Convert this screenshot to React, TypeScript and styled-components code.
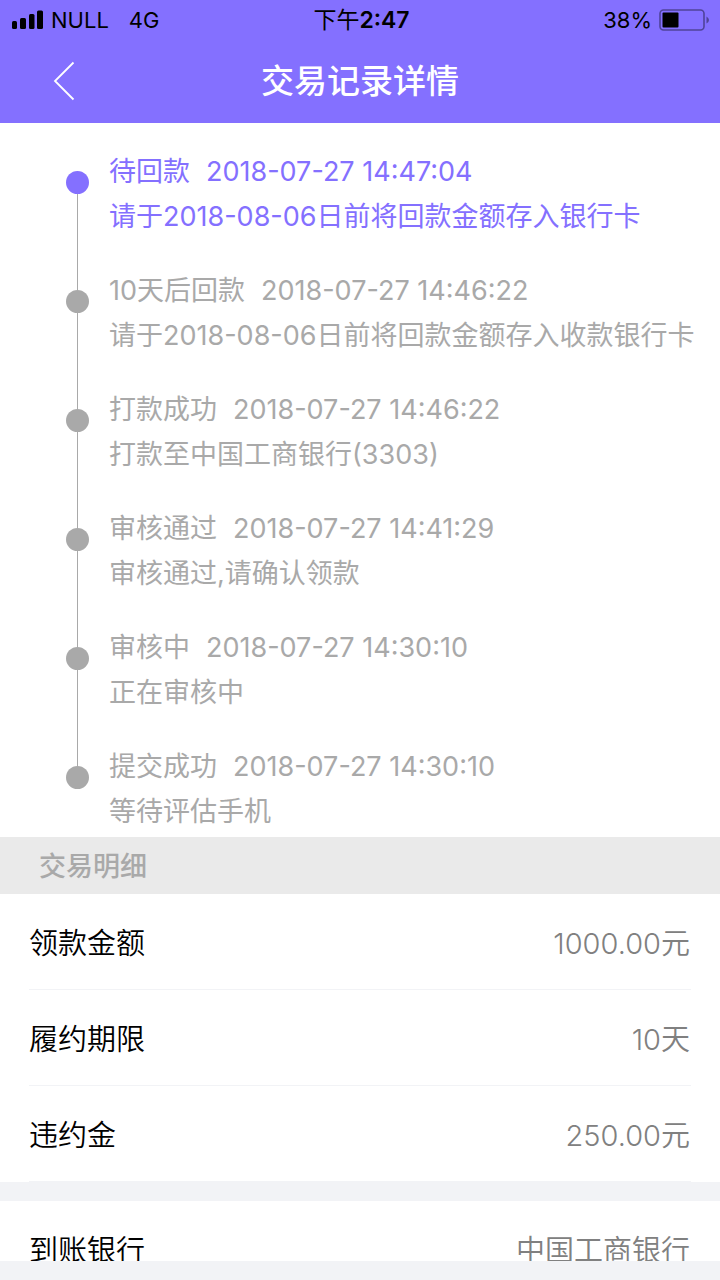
import React from "react";
import styled, { createGlobalStyle, css } from "styled-components";

const GlobalStyle = createGlobalStyle`
  *, *::before, *::after { box-sizing: border-box; }
  body {
    margin: 0;
    background: #f2f3f6;
    font-family: Inter, "Noto Sans CJK SC", sans-serif;
  }
`;

const accent = "#8470ff";
const muted = "#a9a9a9";

const Screen = styled.div`
  display: flex;
  flex-direction: column;
  height: 100vh;
`;

const Header = styled.header`
  flex: none;
  background: ${accent};
`;

const StatusBar = styled.div`
  display: grid;
  grid-template-columns: 1fr auto 1fr;
  align-items: center;
  height: 40px;
  padding: 0 11px;
  font-size: 22px;
  line-height: 40px;
  color: #000;
`;

const StatusGroup = styled.div<{ $end?: boolean }>`
  display: flex;
  align-items: center;
  gap: 7px;
  justify-content: ${(p) => (p.$end ? "flex-end" : "flex-start")};
  ${(p) => p.$end && css`margin-right: -1px;`}
`;

const Network = styled.span`
  margin-left: 13px;
`;

const Clock = styled.time`
  padding-left: 3px;
  font-size: 23px;
  font-weight: 600;
`;

const Period = styled.span`
  font-weight: 400;
`;

const NavBar = styled.div`
  display: grid;
  grid-template-columns: 80px 1fr 80px;
  align-items: center;
  height: 83px;
  padding-bottom: 2px;
`;

const BackButton = styled.button`
  display: flex;
  align-items: center;
  justify-content: flex-end;
  height: 100%;
  padding: 0 5px 0 0;
  border: 0;
  background: none;
  cursor: pointer;
`;

const Title = styled.h1`
  margin: 0;
  font-size: 33px;
  line-height: 48px;
  font-weight: 500;
  text-align: center;
  color: #fff;
`;

const Content = styled.main`
  flex: 1;
  min-height: 0;
  overflow-y: auto;
  scrollbar-width: none;
`;

const Timeline = styled.ol`
  margin: 0;
  padding: 26px 0 3px 66px;
  list-style: none;
  background: #fff;
`;

const Step = styled.li<{ $active?: boolean }>`
  display: flex;
  gap: 20px;
  color: ${(p) => (p.$active ? accent : muted)};
`;

const Rail = styled.div`
  display: flex;
  flex: none;
  flex-direction: column;
  align-items: center;
  width: 23px;
`;

const Lead = styled.span<{ $hidden: boolean }>`
  width: 1px;
  height: 22px;
  background: ${(p) => (p.$hidden ? "transparent" : muted)};
`;

const Trail = styled.span<{ $hidden: boolean }>`
  flex: 1;
  width: 1px;
  background: ${(p) => (p.$hidden ? "transparent" : muted)};
`;

const Dot = styled.span`
  width: 23px;
  height: 23px;
  border-radius: 50%;
  background: currentColor;
`;

const StepBody = styled.div<{ $last: boolean }>`
  padding-bottom: ${(p) => (p.$last ? 0 : 29)}px;
  font-size: 27px;
  line-height: 45px;
  font-weight: 380;
  white-space: nowrap;
`;

const StepLine = styled.p`
  display: flex;
  gap: 16px;
  margin: 0;
`;

const SectionTitle = styled.h2`
  margin: 0;
  padding: 2px 39px 0;
  font-size: 27px;
  line-height: 55px;
  font-weight: 500;
  color: ${muted};
  background: #eaeaea;
`;

const Details = styled.dl`
  margin: 0 0 19px;
  padding: 0 29px;
  background: #fff;
`;

const Row = styled.div`
  display: flex;
  align-items: center;
  justify-content: space-between;
  height: 96px;
  padding-top: 5px;
  border-bottom: 1px solid #f2f3f6;
  font-size: 29px;
  line-height: 44px;
  font-weight: 350;
`;

const Label = styled.dt`
  color: #000;
`;

const Value = styled.dd`
  margin: 0;
  padding-right: 1px;
  color: #808080;
`;

const BottomBar = styled.footer`
  flex: none;
  height: 19px;
  background: #f2f3f6;
`;

const SignalIcon = () => (
  <svg width="33" height="20" viewBox="0 0 33 20" aria-hidden="true">
    <rect x="1" y="11" width="5" height="8" rx="1.5" />
    <rect x="9" y="8" width="6" height="11" rx="1.5" />
    <rect x="18" y="4" width="5.5" height="15" rx="1.5" />
    <rect x="26" y="0.5" width="6" height="18.5" rx="1.5" />
  </svg>
);

const BatteryIcon = () => (
  <svg width="51" height="22" viewBox="0 0 51 22" aria-hidden="true">
    <rect x="1" y="1" width="44" height="20" rx="3.5" fill="none" stroke="#4f4399" strokeWidth="1.6" />
    <rect x="3.5" y="3.5" width="16" height="15" rx="1" />
    <path d="M47.5 7.5Q50 9 50 11T47.5 14.5Z" fill="#4f4399" />
  </svg>
);

const BackIcon = () => (
  <svg width="22" height="40" viewBox="0 0 22 40" fill="none" stroke="#fff" strokeWidth="1.8" aria-hidden="true">
    <path d="M20.5 1.5L2 20L20.5 38.5" />
  </svg>
);

const steps = [
  { name: "待回款", time: "2018-07-27 14:47:04", note: "请于2018-08-06日前将回款金额存入银行卡" },
  { name: "10天后回款", time: "2018-07-27 14:46:22", note: "请于2018-08-06日前将回款金额存入收款银行卡" },
  { name: "打款成功", time: "2018-07-27 14:46:22", note: "打款至中国工商银行(3303)" },
  { name: "审核通过", time: "2018-07-27 14:41:29", note: "审核通过,请确认领款" },
  { name: "审核中", time: "2018-07-27 14:30:10", note: "正在审核中" },
  { name: "提交成功", time: "2018-07-27 14:30:10", note: "等待评估手机" },
];

const groups = [
  [
    { label: "领款金额", value: "1000.00元" },
    { label: "履约期限", value: "10天" },
    { label: "违约金", value: "250.00元" },
  ],
  [{ label: "到账银行", value: "中国工商银行" }],
];

export default function App() {
  return (
    <Screen lang="zh-CN">
      <GlobalStyle />
      <Header>
        <StatusBar>
          <StatusGroup>
            <SignalIcon />
            <span>NULL</span>
            <Network>4G</Network>
          </StatusGroup>
          <Clock>
            <Period>下午</Period>2:47
          </Clock>
          <StatusGroup $end>
            <span>38%</span>
            <BatteryIcon />
          </StatusGroup>
        </StatusBar>
        <NavBar>
          <BackButton type="button" aria-label="返回">
            <BackIcon />
          </BackButton>
          <Title>交易记录详情</Title>
        </NavBar>
      </Header>
      <Content>
        <Timeline>
          {steps.map((step, i) => (
            <Step key={i} $active={i === 0}>
              <Rail>
                <Lead $hidden={i === 0} />
                <Dot />
                <Trail $hidden={i === steps.length - 1} />
              </Rail>
              <StepBody $last={i === steps.length - 1}>
                <StepLine>
                  <span>{step.name}</span>
                  <time>{step.time}</time>
                </StepLine>
                <StepLine>{step.note}</StepLine>
              </StepBody>
            </Step>
          ))}
        </Timeline>
        <SectionTitle>交易明细</SectionTitle>
        {groups.map((rows, i) => (
          <Details key={i}>
            {rows.map((row) => (
              <Row key={row.label}>
                <Label>{row.label}</Label>
                <Value>{row.value}</Value>
              </Row>
            ))}
          </Details>
        ))}
      </Content>
      <BottomBar />
    </Screen>
  );
}
